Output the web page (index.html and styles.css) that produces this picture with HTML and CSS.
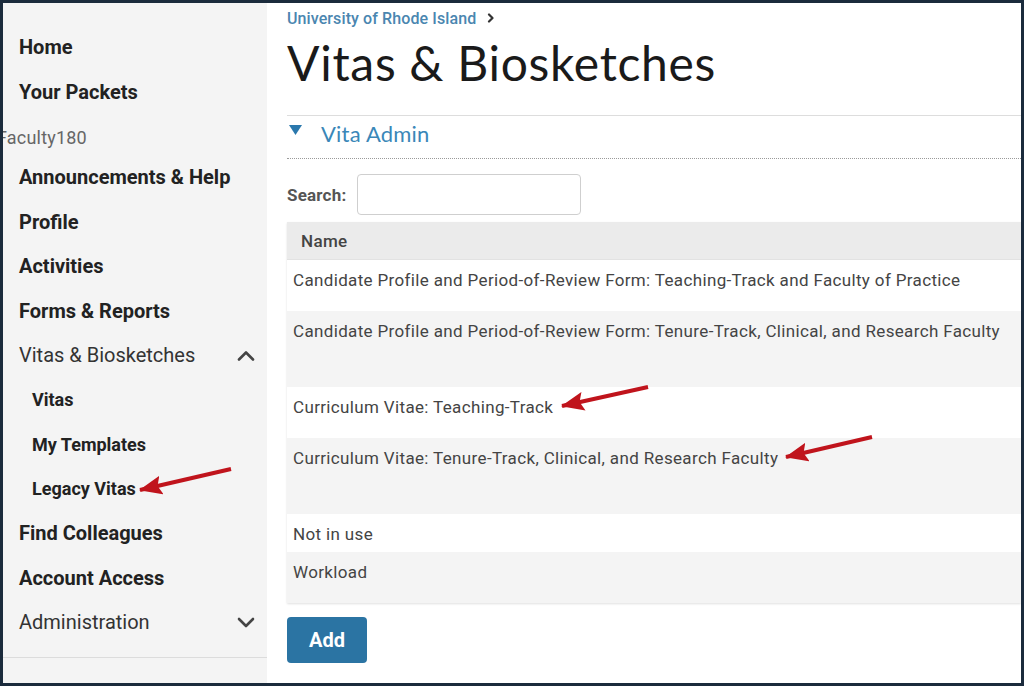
FILE: index.html
```html
<!DOCTYPE html>
<html lang="en">
<head>
<meta charset="utf-8">
<title>Vitas &amp; Biosketches</title>
<link rel="stylesheet" href="styles.css">
</head>
<body>
<div class="frame">
  <nav class="sidebar">
    <div class="nav-item">Home</div>
    <div class="nav-item">Your Packets</div>
    <div class="nav-label">Faculty180</div>
    <div class="nav-item">Announcements &amp; Help</div>
    <div class="nav-item">Profile</div>
    <div class="nav-item">Activities</div>
    <div class="nav-item">Forms &amp; Reports</div>
    <div class="nav-item group">
      <span>Vitas &amp; Biosketches</span>
      <svg class="chev" width="18" height="11" viewBox="0 0 18 11"><path d="M2 9.5 L9 2.5 L16 9.5" fill="none" stroke="#444" stroke-width="2.6" stroke-linecap="round" stroke-linejoin="round"/></svg>
    </div>
    <div class="nav-item sub">Vitas</div>
    <div class="nav-item sub">My Templates</div>
    <div class="nav-item sub">Legacy Vitas</div>
    <div class="nav-item">Find Colleagues</div>
    <div class="nav-item">Account Access</div>
    <div class="nav-item group">
      <span>Administration</span>
      <svg class="chev" width="18" height="11" viewBox="0 0 18 11"><path d="M2 2 L9 9 L16 2" fill="none" stroke="#444" stroke-width="2.6" stroke-linecap="round" stroke-linejoin="round"/></svg>
    </div>
    <div class="sidebar-rule"></div>
  </nav>

  <main class="main">
    <div class="breadcrumb">
      <span class="crumb-link">University of Rhode Island</span>
      <svg class="crumb-sep" width="8" height="10" viewBox="0 0 8 10"><path d="M2 1.5 L5.5 5 L2 8.5" fill="none" stroke="#333" stroke-width="2.2" stroke-linecap="round" stroke-linejoin="round"/></svg>
    </div>
    <h1 class="title">Vitas &amp; Biosketches</h1>
    <div class="section-head">
      <svg class="caret" width="13" height="10" viewBox="0 0 13 10"><path d="M0 0 H13 L6.5 10 Z" fill="#2a78ad"/></svg>
      <span class="section-title">Vita Admin</span>
    </div>
    <div class="search-row">
      <label class="search-label">Search:</label>
      <div class="search-input"></div>
    </div>
    <div class="table">
      <div class="thead">Name</div>
      <div class="row tall-1">Candidate Profile and Period-of-Review Form: Teaching-Track and Faculty of Practice</div>
      <div class="row alt tall-2">Candidate Profile and Period-of-Review Form: Tenure-Track, Clinical, and Research Faculty</div>
      <div class="row tall-1">Curriculum Vitae: Teaching-Track</div>
      <div class="row alt tall-2">Curriculum Vitae: Tenure-Track, Clinical, and Research Faculty</div>
      <div class="row tall-0">Not in use</div>
      <div class="row alt tall-1">Workload</div>
    </div>
    <button class="btn-add">Add</button>
  </main>

  <svg class="annotations" width="1024" height="686" viewBox="0 0 1024 686">
    <defs>
      <marker id="head" markerUnits="userSpaceOnUse" markerWidth="23" markerHeight="19" refX="22" refY="9.5" orient="auto">
        <path d="M0 0 L23 9.5 L0 19 L4 9.5 Z" fill="#c0141c"/>
      </marker>
    </defs>
    <line x1="231" y1="469" x2="140" y2="490" stroke="#c0141c" stroke-width="4" marker-end="url(#head)"/>
    <line x1="648" y1="387" x2="562" y2="406" stroke="#c0141c" stroke-width="4" marker-end="url(#head)"/>
    <line x1="872" y1="437" x2="786" y2="457" stroke="#c0141c" stroke-width="4" marker-end="url(#head)"/>
  </svg>
</div>
</body>
</html>
```
FILE: styles.css
```css
html, body {
  margin: 0;
  padding: 0;
  background: #fff;
}

.frame {
  position: relative;
  width: 1024px;
  height: 686px;
  box-sizing: border-box;
  border: 3px solid #1b2b3c;
  display: flex;
  overflow: hidden;
  background: #fff;
  font-family: Roboto, "Liberation Sans", Arial, sans-serif;
}

/* Sidebar */
.sidebar {
  width: 264px;
  flex: none;
  background: #f4f4f4;
  box-sizing: border-box;
  padding-top: 22px;
}

.nav-item {
  height: 44.5px;
  display: flex;
  align-items: center;
  padding-left: 16px;
  padding-right: 12px;
  font-size: 20px;
  font-weight: 700;
  color: #222;
  white-space: nowrap;
}

.nav-item.sub {
  padding-left: 29px;
  font-size: 18px;
}

.nav-item.group {
  font-weight: 400;
  color: #333;
  justify-content: space-between;
}

.chev {
  display: block;
}

.nav-label {
  margin-left: -6px;
  padding-top: 7px;
  line-height: 34px;
  font-size: 18px;
  letter-spacing: 0.2px;
  color: #666;
}

.sidebar-rule {
  margin-top: 12px;
  border-top: 1px solid #dcdcdc;
}

/* Main */
.main {
  flex: 1;
  min-width: 0;
  padding-left: 20px;
}

.breadcrumb {
  margin-top: 5px;
  height: 20px;
  display: flex;
  align-items: center;
  font-size: 16px;
  font-weight: 500;
  letter-spacing: 0.1px;
  color: #4a86b0;
}

.crumb-sep {
  margin-left: 11px;
}

.title {
  margin: 5px 0 22px;
  font-family: Lato, "Open Sans", sans-serif;
  font-weight: 400;
  font-size: 48px;
  letter-spacing: 0.7px;
  line-height: 60px;
  color: #1a1a1a;
}

.section-head {
  border-top: 1px solid #dddddd;
  border-bottom: 1px dotted #9a9a9a;
  height: 34px;
  padding-bottom: 8px;
  display: flex;
  align-items: center;
}

.caret {
  margin-left: 2px;
  margin-right: 19px;
  margin-bottom: 6px;
}

.section-title {
  font-family: Lato, "Open Sans", sans-serif;
  font-size: 22px;
  letter-spacing: 0.2px;
  color: #3a87b8;
}

.search-row {
  margin-top: 15px;
  display: flex;
  align-items: center;
  gap: 11px;
}

.search-label {
  font-size: 17px;
  font-weight: 700;
  letter-spacing: 0.2px;
  color: #555;
}

.search-input {
  width: 222px;
  height: 39px;
  border: 1px solid #cfcfcf;
  border-radius: 4px;
  background: #fff;
}

.table {
  margin-top: 7px;
  box-shadow: 0 1px 2px rgba(0, 0, 0, 0.12);
  font-size: 17px;
  letter-spacing: 0.35px;
  color: #444;
}

.thead {
  height: 38px;
  display: flex;
  align-items: center;
  padding-left: 14px;
  background: #ebebeb;
  border-bottom: 1px solid #e2e2e2;
  box-sizing: border-box;
  font-weight: 500;
  color: #444;
}

.row {
  box-sizing: border-box;
  padding: 10px 0 0 6px;
  line-height: 20px;
  background: #fff;
  white-space: nowrap;
}

.row.alt {
  background: #f4f4f4;
}

.tall-0 { height: 38px; }
.tall-1 { height: 51px; }
.tall-2 { height: 76px; }

.btn-add {
  margin-top: 14px;
  width: 80px;
  height: 46px;
  border: none;
  border-radius: 4px;
  background: #2b74a3;
  color: #fff;
  font-family: Roboto, "Liberation Sans", Arial, sans-serif;
  font-size: 20px;
  font-weight: 700;
  padding: 0;
}

/* Annotation arrows drawn over the screenshot */
.annotations {
  position: absolute;
  left: -3px;
  top: -3px;
  pointer-events: none;
}
```
